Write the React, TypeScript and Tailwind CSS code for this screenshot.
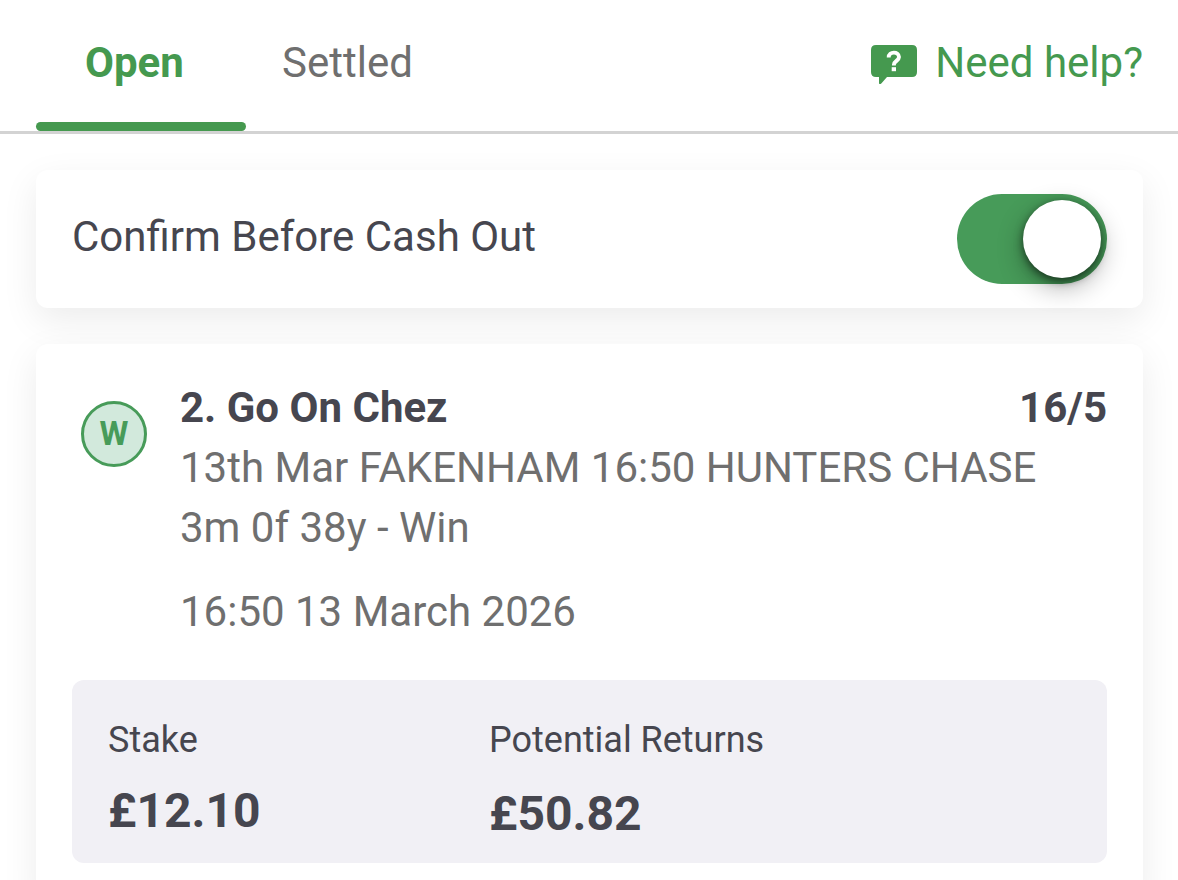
import { useState } from "react";

function HelpIcon() {
  return (
    <svg className="h-[42px] w-[46px]" viewBox="0 0 46 42" aria-hidden="true">
      <path
        fill="currentColor"
        d="M5 3H41Q46 3 46 8V30Q46 35 41 35H16L10.500 41.300Q8 43.500 8 40.500V35H5Q0 35 0 30V8Q0 3 5 3Z"
      />
      <path
        d="M17.700 15.500C17.700 9 28 9.100 28 15C28 18.700 22.900 19 22.900 22.700V23.500"
        fill="none"
        stroke="#fff"
        strokeWidth="3.900"
      />
      <rect x="20.700" y="25.200" width="4.300" height="4" fill="#fff" />
    </svg>
  );
}

const tabs = ["Open", "Settled"];

export default function App() {
  const [active, setActive] = useState("Open");
  const [confirm, setConfirm] = useState(true);

  return (
    <div className="min-h-screen bg-white font-['Roboto',sans-serif] text-[42px] leading-[60px] text-[#46464f]">
      <header className="flex items-start justify-between border-b-3 border-[#d3d3d3] pr-[35px] pl-9">
        <nav className="flex gap-9">
          {tabs.map((tab) => (
            <button
              key={tab}
              type="button"
              onClick={() => setActive(tab)}
              className={
                active === tab
                  ? "flex w-[210px] flex-col pt-[33px] text-left font-bold text-[#45994f]"
                  : "flex flex-col pt-[33px] text-left text-[#6f6f6f]"
              }
            >
              <span className={active === tab ? "pl-[49px]" : ""}>{tab}</span>
              <span
                className={
                  active === tab
                    ? "mt-[29px] h-[9px] w-full rounded-full bg-[#45994f]"
                    : "mt-[29px] h-[9px] w-full"
                }
              />
            </button>
          ))}
        </nav>
        <a href="#help" className="flex items-center gap-[18px] pt-[33px] text-[#45994f]">
          <HelpIcon />
          Need help?
        </a>
      </header>

      <main className="flex flex-col gap-9 pt-9 pr-[35px] pl-9">
        <section className="flex items-start justify-between rounded-xl bg-white px-9 py-6 shadow-[0_12px_36px_rgba(0,0,0,0.08)]">
          <label htmlFor="confirm" className="pt-[13px]">
            Confirm Before Cash Out
          </label>
          <input
            id="confirm"
            type="checkbox"
            role="switch"
            checked={confirm}
            onChange={(e) => setConfirm(e.target.checked)}
            className="flex h-[90px] w-[150px] cursor-pointer appearance-none items-center rounded-full bg-[#b5b5b5] px-1.5 before:size-[78px] before:rounded-full before:bg-white before:shadow-[0_9px_27px_rgba(0,0,0,0.32),0_3px_9px_rgba(0,0,0,0.55)] before:content-[''] checked:justify-end checked:bg-[#479b59]"
          />
        </section>

        <section className="rounded-xl bg-white px-9 pt-[34px] pb-9 shadow-[0_12px_36px_rgba(0,0,0,0.08)]">
          <div className="flex">
            <div className="w-[108px] shrink-0 pt-[23px] pl-[9px]">
              <div className="flex size-[66px] items-center justify-center rounded-full border-3 border-[#479b59] bg-[#d2e9dc] text-[33px] font-bold text-[#479b59]">
                W
              </div>
            </div>
            <div className="grow">
              <div className="flex justify-between font-bold">
                <h2>2. Go On Chez</h2>
                <span>16/5</span>
              </div>
              <p className="max-w-[880px] text-[#6f6f6f]">
                13th Mar FAKENHAM 16:50 HUNTERS CHASE 3m 0f 38y - Win
              </p>
              <p className="mt-6 text-[#6f6f6f]">16:50 13 March 2026</p>
            </div>
          </div>

          <dl className="mt-[38px] grid grid-cols-[381px_1fr] rounded-xl bg-[#f1f0f5] px-9 pt-9 pb-[19px]">
            <div>
              <dt className="text-[36px] leading-[48px]">Stake</dt>
              <dd className="mt-[17px] text-[48px] leading-[60px] font-bold">£12.10</dd>
            </div>
            <div>
              <dt className="text-[36px] leading-[48px]">Potential Returns</dt>
              <dd className="mt-5 text-[48px] leading-[60px] font-bold">£50.82</dd>
            </div>
          </dl>
        </section>
      </main>
    </div>
  );
}
